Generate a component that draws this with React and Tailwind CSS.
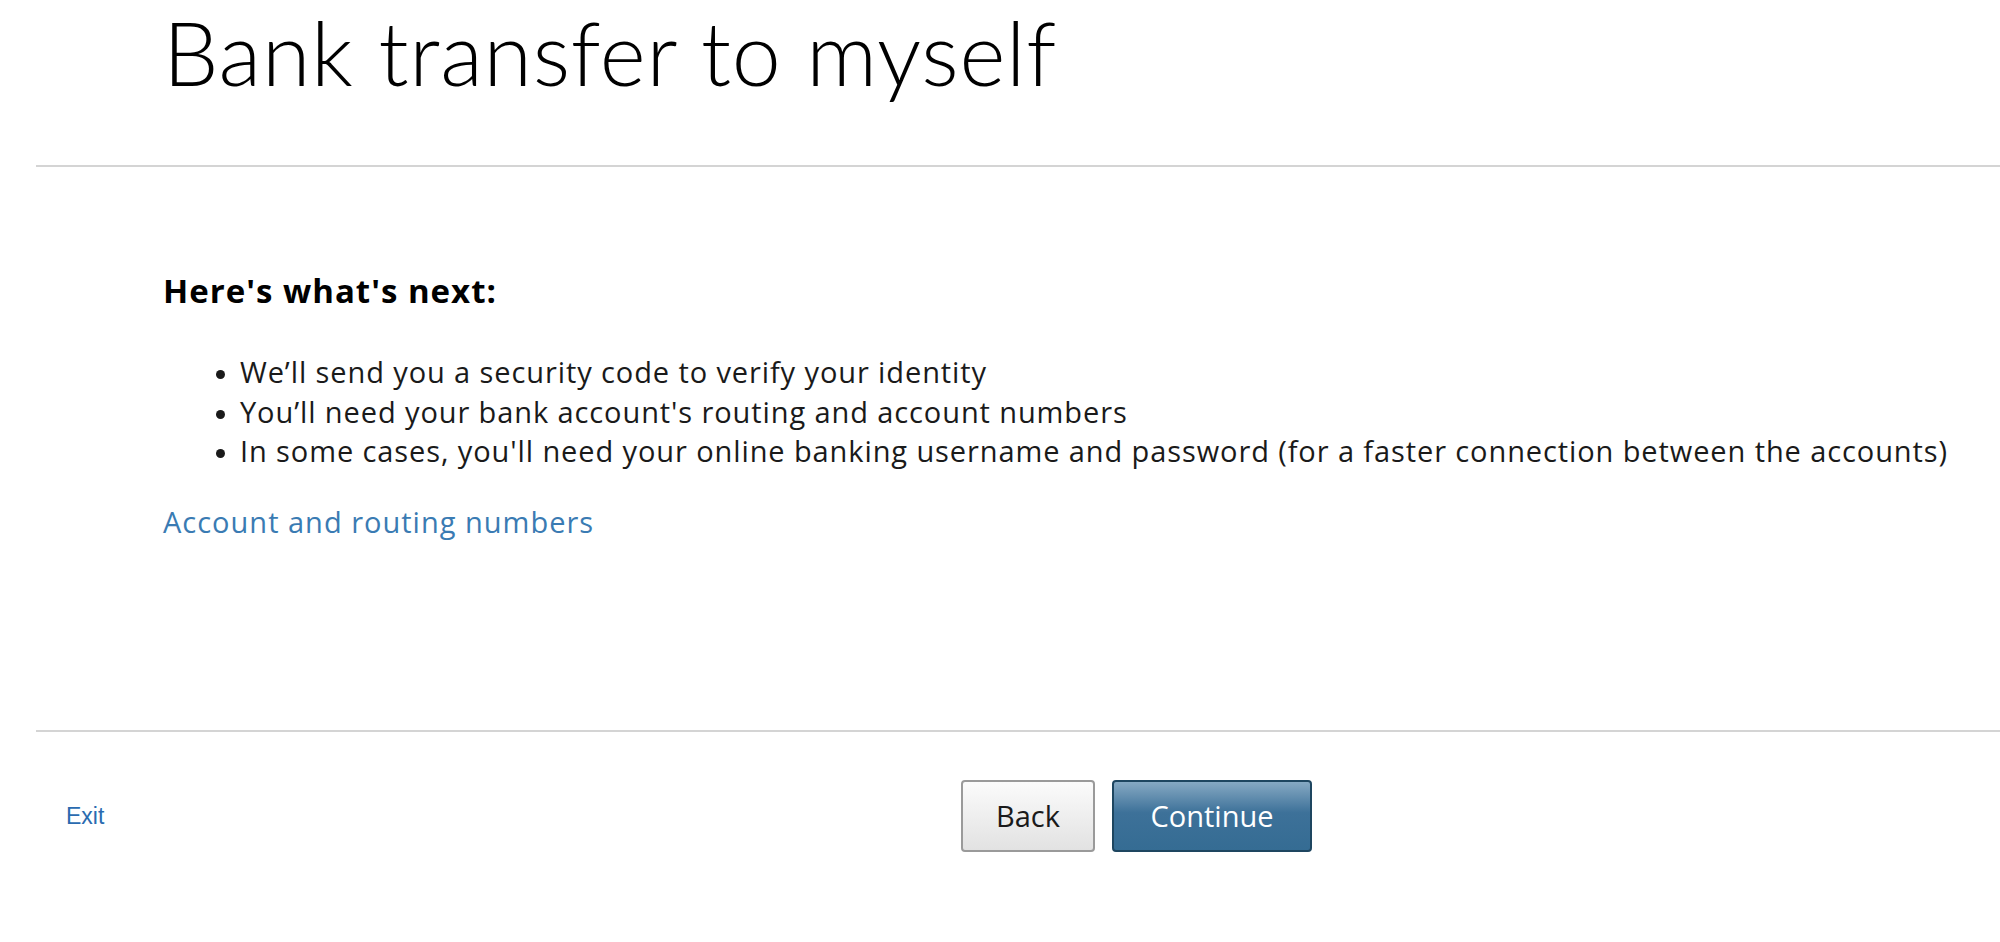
export default function App() {
  return (
    <div className="min-h-[942px] w-[2000px] bg-white font-['Open_Sans',sans-serif] text-[#111]">
      <header className="h-[165px] pl-[163px] pt-[2px]">
        <h1 className="font-['Lato',sans-serif] text-[88px] font-light leading-[100px] tracking-[0.75px] text-black">Bank transfer to myself</h1>
      </header>
      <hr className="ml-[36px] border-t-2 border-[#d4d4d4]" />

      <main className="h-[563px] pl-[163px] pt-[104px]">
        <h2 className="text-[33px] font-bold leading-[40px] tracking-[1px] text-black">Here's what's next:</h2>
        <ul className="mt-[41px] list-disc pl-[77px] text-[29px] leading-[39.5px] tracking-[0.9px] text-[#1a1a1a] marker:text-[24px]">
          <li>We’ll send you a security code to verify your identity</li>
          <li>You’ll need your bank account's routing and account numbers</li>
          <li>In some cases, you'll need your online banking username and password (for a faster connection between the accounts)</li>
        </ul>
        <a href="#" className="mt-[31px] block text-[29px] leading-[40px] tracking-[1px] text-[#3a7bb3]">Account and routing numbers</a>
      </main>

      <hr className="ml-[36px] border-t-2 border-[#d4d4d4]" />

      <footer className="flex items-center pt-[48px]">
        <a href="#" className="ml-[66px] w-[160px] font-['Liberation_Sans',sans-serif] text-[23px] text-[#2a6bb0]">Exit</a>
        <div className="ml-[735px] flex gap-[17px]">
          <button className="h-[72px] w-[134px] rounded-[4px] border-2 border-[#9a9a9a] bg-gradient-to-b from-[#fbfbfb] to-[#e2e2e2] text-[29px] text-[#1a1a1a]">Back</button>
          <button className="h-[72px] w-[200px] rounded-[4px] border-2 border-[#1e4660] bg-[linear-gradient(to_bottom,#86a9c3_0%,#3d7199_45%,#356c93_100%)] text-[29px] text-white">Continue</button>
        </div>
      </footer>
    </div>
  )
}
